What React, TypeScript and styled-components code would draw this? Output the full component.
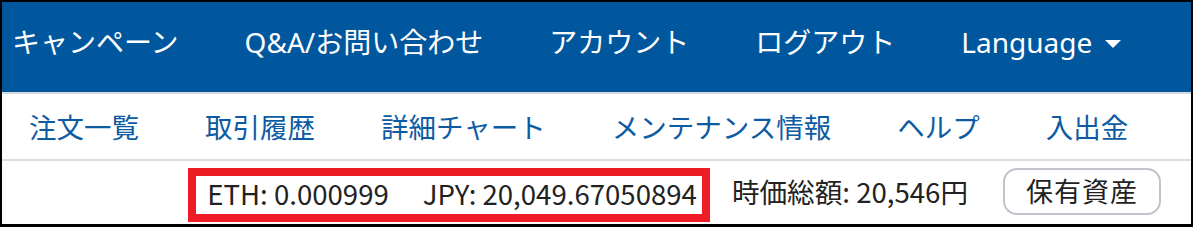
import React from 'react';
import styled, { createGlobalStyle } from 'styled-components';

const GlobalStyle = createGlobalStyle`
    html, body {
        margin: 0;
        padding: 0;
        background: #ffffff;
    }
    body {
        font-family: "Noto Sans CJK JP", "Noto Sans", sans-serif;
    }
`;

const Frame = styled.div`
    width: 1193px;
    height: 227px;
    box-sizing: border-box;
    border: 2px solid #000;
    border-bottom-width: 3px;
    background: #fff;
    overflow: hidden;
`;

const TopBar = styled.nav`
    display: flex;
    align-items: center;
    gap: 66px;
    height: 92px;
    box-sizing: border-box;
    padding: 0 0 10px 10px;
    background: #00579e;
    border-bottom: 2px solid #d6d8e2;
`;

const TopLink = styled.a`
    display: flex;
    align-items: center;
    gap: 13px;
    color: #ffffff;
    font-family: "Noto Sans", "Noto Sans CJK JP", sans-serif;
    font-size: 28px;
    line-height: 1;
    text-decoration: none;
    white-space: nowrap;
`;

const Caret = styled.span`
    width: 0;
    height: 0;
    margin-top: 3px;
    border-left: 8px solid transparent;
    border-right: 8px solid transparent;
    border-top: 8px solid #ffffff;
`;

const SubBar = styled.nav`
    display: flex;
    align-items: center;
    gap: 66px;
    height: 67px;
    box-sizing: border-box;
    padding: 0 0 0 27px;
    border-bottom: 2px solid #dcdde5;
`;

const SubLink = styled.a`
    color: #0d5ba3;
    font-size: 27.5px;
    line-height: 1;
    text-decoration: none;
    white-space: nowrap;
`;

const BalanceRow = styled.div`
    display: flex;
    align-items: center;
    justify-content: flex-end;
    height: 61px;
    padding-right: 30px;
    color: #222222;
    font-size: 27.6px;
    line-height: 1;
`;

const Highlight = styled.div`
    display: flex;
    align-items: center;
    gap: 34px;
    height: 54px;
    margin-top: 6px;
    box-sizing: border-box;
    padding: 0 5px 2px 11px;
    border: 8px solid #ee1c25;
    margin-right: 22px;
`;

const Amount = styled.span`
    white-space: nowrap;
`;

const Total = styled.span`
    white-space: nowrap;
    margin-right: 35px;
`;

const AssetButton = styled.button`
    height: 47px;
    width: 158px;
    box-sizing: border-box;
    border: 2px solid #c2c3cb;
    border-radius: 14px;
    background: #ffffff;
    color: #222222;
    font-family: inherit;
    font-size: 27px;
    line-height: 1;
    letter-spacing: 1px;
    padding: 0 0 2px;
    cursor: pointer;
`;

const topLinks = ['キャンペーン', 'Q&A/お問い合わせ', 'アカウント', 'ログアウト'];
const subLinks = ['注文一覧', '取引履歴', '詳細チャート', 'メンテナンス情報', 'ヘルプ', '入出金'];

const App: React.FC = () => {
    return (
        <>
            <GlobalStyle />
            <Frame>
                <TopBar>
                    {topLinks.map((label) => (
                        <TopLink key={label} href="#">{label}</TopLink>
                    ))}
                    <TopLink href="#">
                        Language <Caret />
                    </TopLink>
                </TopBar>
                <SubBar>
                    {subLinks.map((label) => (
                        <SubLink key={label} href="#">{label}</SubLink>
                    ))}
                </SubBar>
                <BalanceRow>
                    <Highlight>
                        <Amount>ETH: 0.000999</Amount>
                        <Amount>JPY: 20,049.67050894</Amount>
                    </Highlight>
                    <Total>時価総額: 20,546円</Total>
                    <AssetButton>保有資産</AssetButton>
                </BalanceRow>
            </Frame>
        </>
    );
};

export default App;
